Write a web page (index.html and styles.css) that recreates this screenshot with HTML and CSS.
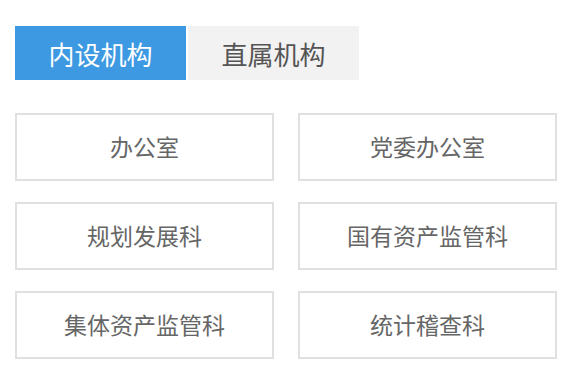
FILE: index.html
```html
<!DOCTYPE html>
<html lang="zh-CN">
<head>
<meta charset="UTF-8" />
<title>机构设置</title>
<link rel="stylesheet" href="styles.css">
</head>
<body>

<div class="org">
  <div class="tabs">
    <div class="tab active">内设机构</div>
    <div class="tab">直属机构</div>
  </div>

  <div class="grid">
    <div class="item">办公室</div>
    <div class="item">党委办公室</div>
    <div class="item">规划发展科</div>
    <div class="item">国有资产监管科</div>
    <div class="item">集体资产监管科</div>
    <div class="item">统计稽查科</div>
  </div>
</div>

</body>
</html>
```

FILE: styles.css
```css
body {
  margin: 0;
  background: #fff;
  font-family: "Noto Sans CJK SC", "Noto Sans", sans-serif;
}
.org {
  padding: 26px 27px 0 15px;
}
.tabs {
  display: flex;
  gap: 2px;
}
.tab {
  width: 171px;
  height: 54px;
  display: flex;
  align-items: center;
  justify-content: center;
  font-size: 26px;
  color: #555;
  background-color: #f2f2f2;
}
.tab.active {
  background-color: #3d99e1;
  color: #fff;
}
.grid {
  margin-top: 33px;
  display: grid;
  grid-template-columns: 259px 259px;
  column-gap: 24px;
  row-gap: 21px;
}
.item {
  height: 68px;
  box-sizing: border-box;
  border: 2px solid #e0e0e0;
  display: flex;
  align-items: center;
  justify-content: center;
  padding-bottom: 2px;
  font-size: 23px;
  color: #666;
}
```
